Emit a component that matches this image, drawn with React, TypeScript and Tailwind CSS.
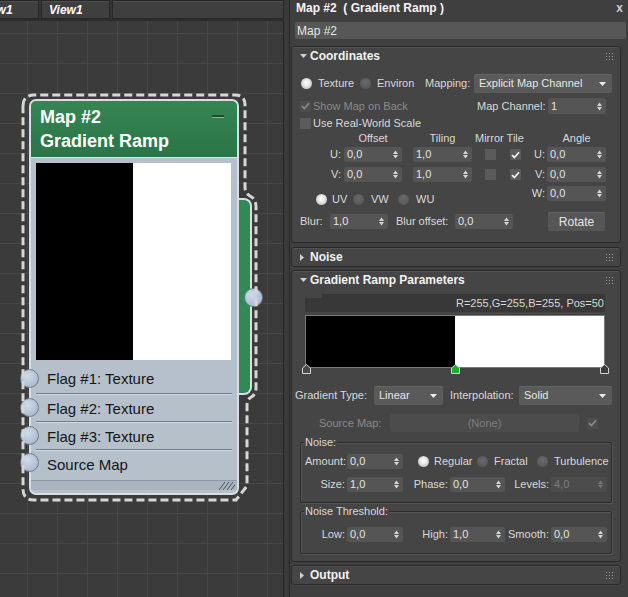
import type { ReactNode } from 'react';

// --- small form atoms (3ds Max dark UI) ---

function T({ children, className = '', dim = false }: { children: ReactNode; className?: string; dim?: boolean }) {
  return (
    <span
      className={`shrink-0 whitespace-nowrap text-[11px] leading-none ${dim ? 'text-[#8a8a8a]' : 'text-[#d9d9d9]'} ${className}`}
    >
      {children}
    </span>
  );
}

function Arrows({ dim = false }: { dim?: boolean }) {
  return (
    <svg width="5" height="9" viewBox="0 0 5 9" className="ml-auto mr-[4px] shrink-0">
      <path d="M0 4 L2.5 0.6 L5 4 Z M0 5 L2.5 8.4 L5 5 Z" fill={dim ? '#777777' : '#d6d6d6'} />
    </svg>
  );
}

function Spinner({ value, className = '', dim = false }: { value: string; className?: string; dim?: boolean }) {
  return (
    <div
      className={`flex shrink-0 items-center rounded-[2px] pl-[3px] text-[11px] leading-none ${
        dim ? 'bg-[#4c4c4c] text-[#7c7c7c]' : 'bg-[#555555] text-[#e4e4e4]'
      } ${className}`}
    >
      <span>{value}</span>
      <Arrows dim={dim} />
    </div>
  );
}

function Dropdown({ value, className = '' }: { value: string; className?: string }) {
  return (
    <div
      className={`flex h-[19px] shrink-0 items-center rounded-[2px] bg-[#5a5a5a] pl-[5px] text-[11px] leading-none text-[#e6e6e6] shadow-[inset_0_1px_0_#656565] ${className}`}
    >
      <span>{value}</span>
      <svg width="7" height="4" viewBox="0 0 7 4" className="ml-auto mr-[6px]">
        <path d="M0 0 H7 L3.5 4 Z" fill="#ececec" />
      </svg>
    </div>
  );
}

function Radio({ on = false, className = '' }: { on?: boolean; className?: string }) {
  return (
    <span
      className={`block h-[11px] w-[11px] shrink-0 rounded-full ${
        on
          ? 'bg-[radial-gradient(circle_at_50%_45%,#ffffff_0%,#ececec_35%,#a9a9a9_100%)]'
          : 'bg-[radial-gradient(circle_at_50%_40%,#6a6a6a_0%,#5b5b5b_60%,#4b4b4b_100%)]'
      } ${className}`}
    />
  );
}

function Check({ on = false, dim = false, className = '' }: { on?: boolean; dim?: boolean; className?: string }) {
  return (
    <span
      className={`flex h-[11px] w-[11px] shrink-0 items-center justify-center rounded-[1px] ${
        dim ? 'bg-[#4d4d4d]' : 'bg-[#5b5b5b]'
      } ${className}`}
    >
      {on && (
        <svg width="9" height="8" viewBox="0 0 9 8">
          <path d="M1 4.2 L3.4 6.6 L8 1.2" fill="none" stroke={dim ? '#8a8a8a' : '#f4f4f4'} strokeWidth="1.7" />
        </svg>
      )}
    </span>
  );
}

function Grip() {
  return (
    <svg width="7" height="7" viewBox="0 0 7 7">
      {[0, 3, 6].flatMap((y) =>
        [0, 3, 6].map((x) => <rect key={`${x}-${y}`} x={x} y={y} width="1" height="1" fill="#9c9c9c" />),
      )}
    </svg>
  );
}

function Head({ title, open = false }: { title: string; open?: boolean }) {
  return (
    <div className="flex h-[18px] items-center pl-[8px] pr-[7px]">
      {open ? (
        <svg width="7" height="4" viewBox="0 0 7 4">
          <path d="M0 0 H7 L3.5 4 Z" fill="#d0d0d0" />
        </svg>
      ) : (
        <svg width="4" height="7" viewBox="0 0 4 7">
          <path d="M0 0 L4 3.5 L0 7 Z" fill="#d0d0d0" />
        </svg>
      )}
      <span className={`${open ? 'ml-[3px]' : 'ml-[6px]'} text-[12px] font-bold leading-none text-[#f2f2f2]`}>
        {title}
      </span>
      <span className="ml-auto flex">
        <Grip />
      </span>
    </div>
  );
}

function Rollout({ children, className = '' }: { children: ReactNode; className?: string }) {
  return (
    <div
      className={`ml-[1px] w-[330px] rounded-[3px] border border-[#2a2a2a] bg-[#454545] shadow-[inset_0_1px_0_#525252] ${className}`}
    >
      {children}
    </div>
  );
}

function Marker({ className, fill }: { className: string; fill: string }) {
  return (
    <svg width="9" height="10" viewBox="0 0 9 10" className={`absolute top-[49px] ${className}`}>
      <path d="M0.5 9.5 V4 L4.5 0.5 L8.5 4 V9.5 Z" fill={fill} stroke="#d4d4d4" strokeWidth="1" />
    </svg>
  );
}

// --- node in the slate editor ---

function Pin({ className }: { className: string }) {
  return (
    <span
      className={`absolute block h-[19px] w-[19px] rounded-full border border-[#6c7c8f] bg-[radial-gradient(circle_at_40%_35%,#d0dbe7_0%,#aebdd0_70%,#97a8bd_100%)] ${className}`}
    />
  );
}

function FlagRow({ label, className }: { label: string; className: string }) {
  return (
    <div className={`flex items-center pl-[16px] text-[15px] leading-none text-[#161616] ${className}`}>{label}</div>
  );
}

function Sep() {
  return <div className="mx-[5px] h-[2px] border-t border-b border-t-[#6e7b8a] border-b-[#d3dbe3]" />;
}

function Node() {
  return (
    <div className="absolute left-[29px] top-[78px] w-[210px]">
      {/* output bar */}
      <div className="absolute left-[208px] top-[99px] h-[197px] w-[15px] rounded-r-[8px] border-y-2 border-r-2 border-[#d6dde4] bg-[#2f8a55]" />

      <div className="relative rounded-[7px] border-2 border-[#d7dee5] bg-[#b5c0cb]">
        <div className="relative flex h-[57px] flex-col rounded-t-[5px] border-b border-[#dfe5ea] bg-gradient-to-b from-[#368654] to-[#2b7447] pl-[9px] pt-[4px] font-bold text-white">
          <span className="text-[18px] leading-[24px]">Map #2</span>
          <span className="text-[18px] leading-[24px]">Gradient Ramp</span>
          <span className="absolute right-[13px] top-[14px] h-[3px] w-[12px] border-b border-[#86b797] bg-[#1c4d2f]" />
        </div>

        <div className="flex flex-col pb-[3px] pt-[5px]">
          <div className="ml-[5px] flex h-[197px] w-[195px]">
            <div className="w-[97px] bg-black" />
            <div className="flex-1 bg-white" />
          </div>
          <FlagRow label="Flag #1: Texture" className="mt-[4px] h-[29px]" />
          <Sep />
          <FlagRow label="Flag #2: Texture" className="h-[26px]" />
          <Sep />
          <FlagRow label="Flag #3: Texture" className="h-[26px]" />
          <Sep />
          <FlagRow label="Source Map" className="h-[26px]" />
          <div className="mt-[3px] flex h-[10px] items-end justify-end border-t border-[#8c98a6] bg-[#a9b4bf] pr-[2px]">
            <svg width="18" height="9" viewBox="0 0 18 9">
              {[0, 4, 8, 12].map((x) => (
                <path key={x} d={`M${x + 2} 9 L${x + 8} 1`} stroke="#4a5562" strokeWidth="1" />
              ))}
            </svg>
          </div>
        </div>
      </div>

      <Pin className="left-[-9px] top-[270px]" />
      <Pin className="left-[-9px] top-[299px]" />
      <Pin className="left-[-9px] top-[327px]" />
      <Pin className="left-[-9px] top-[354px]" />
      <Pin className="left-[215px] top-[189px] h-[18px] w-[18px]" />
    </div>
  );
}

function Tab({ children, className = '' }: { children?: ReactNode; className?: string }) {
  return (
    <div
      className={`flex h-full items-center border border-[#272727] bg-[#3f3f3f] text-[12px] font-bold italic text-white shadow-[inset_0_1px_0_#4f4f4f] ${className}`}
    >
      {children}
    </div>
  );
}

export default function App() {
  return (
    <div className="flex h-[597px] w-[628px] overflow-hidden bg-[#2c2c2c] font-['Liberation_Sans',Arial,sans-serif]">
      {/* ── Slate view ── */}
      <div className="flex w-[284px] shrink-0 flex-col">
        <div className="flex h-[19px] shrink-0 bg-[#353535]">
          <div className="w-[39px] overflow-hidden">
            <Tab className="-ml-[30px] w-[69px] pl-[8px]">View1</Tab>
          </div>
          <Tab className="ml-[2px] w-[69px] pl-[7px]">View1</Tab>
          <Tab className="ml-[2px] flex-1" />
        </div>
        <div className="relative mt-[2px] flex-1 overflow-hidden border-r border-[#232323] bg-[#3b3b3b] bg-[linear-gradient(to_right,#474747_1px,transparent_1px),linear-gradient(to_bottom,#474747_1px,transparent_1px)] bg-[size:30px_30px] bg-[position:27px_12px]">
          <Node />
          <svg className="absolute left-0 top-0" width="284" height="576" viewBox="0 21 284 576">
            <path
              d="M23 106 Q23 95 34 95 L235 95 Q245 95 245 105 L245 187 Q245 193 250 196 Q256 199 256 207 L256 388 Q256 395 250 398 Q247 400 247 406 L247 486 L236 500 L34 500 Q23 500 23 489 Z"
              fill="none"
              stroke="#d6d6d6"
              strokeWidth="3"
              strokeDasharray="8 4"
            />
          </svg>
        </div>
      </div>

      <div className="w-[6px] shrink-0 border-r border-[#262626] bg-[#3a3a3a]" />

      {/* ── Parameter editor ── */}
      <div className="flex w-[338px] flex-col bg-[#3f3f3f]">
        <div className="flex h-[15px] items-center pl-[6px] pr-[5px]">
          <span className="whitespace-pre text-[12px] font-bold leading-none text-[#f4f4f4]">Map #2  ( Gradient Ramp )</span>
          <span className="ml-auto text-[12px] font-bold leading-none text-[#cfcfcf]">x</span>
        </div>
        <div className="ml-[5px] mt-[7px] flex h-[17px] w-[331px] items-center rounded-[2px] bg-[#575757] pl-[2px] text-[12px] leading-none text-[#e6e6e6]">
          Map #2
        </div>

        {/* Coordinates */}
        <Rollout className="mt-[7px] pb-[11px]">
          <Head title="Coordinates" open />
          <div className="mt-[9px] flex h-[19px] items-center">
            <Radio on className="ml-[9px]" />
            <T className="ml-[6px] w-[42px]">Texture</T>
            <Radio />
            <T className="ml-[6px] w-[48px]">Environ</T>
            <T className="w-[49px]">Mapping:</T>
            <Dropdown value="Explicit Map Channel" className="w-[138px]" />
          </div>
          <div className="mt-[5px] flex h-[16px] items-center">
            <Check on dim className="ml-[8px]" />
            <T dim className="ml-[2px] w-[164px]">
              Show Map on Back
            </T>
            <T className="w-[71px]">Map Channel:</T>
            <Spinner value="1" className="h-[16px] w-[58px]" />
          </div>
          <div className="mt-[1px] flex h-[16px] items-center">
            <Check className="ml-[8px]" />
            <T className="ml-[2px]">Use Real-World Scale</T>
          </div>
          <div className="flex h-[15px] items-center">
            <T className="ml-[52px] w-[58px] text-center">Offset</T>
            <T className="ml-[11px] w-[59px] text-center">Tiling</T>
            <T className="ml-[3px] w-[50px]">Mirror Tile</T>
            <T className="ml-[22px] w-[59px] text-center">Angle</T>
          </div>
          {[
            { axis: 'U', cls: 'mt-[1px]' },
            { axis: 'V', cls: 'mt-[5px]' },
          ].map(({ axis, cls }) => (
            <div key={axis} className={`flex h-[15px] items-center ${cls}`}>
              <T className="w-[52px] pr-[3px] text-right">{axis}:</T>
              <Spinner value="0,0" className="h-[15px] w-[58px]" />
              <Spinner value="1,0" className="ml-[11px] h-[15px] w-[59px]" />
              <Check className="ml-[13px]" />
              <Check on className="ml-[14px]" />
              <T className="w-[26px] pr-[2px] text-right">{axis}:</T>
              <Spinner value="0,0" className="h-[15px] w-[59px]" />
            </div>
          ))}
          <div className="mt-[4px] flex h-[20px] items-start">
            <div className="mt-[6px] flex h-[14px] w-[229px] shrink-0 items-center">
              <Radio on className="ml-[24px]" />
              <T className="ml-[5px] w-[21px]">UV</T>
              <Radio />
              <T className="ml-[7px] w-[27px]">VW</T>
              <Radio />
              <T className="ml-[7px]">WU</T>
            </div>
            <T className="flex h-[15px] w-[26px] items-center justify-end pr-[2px]">W:</T>
            <Spinner value="0,0" className="h-[15px] w-[59px]" />
          </div>
          <div className="mt-[6px] flex h-[19px] items-center">
            <T className="ml-[8px] w-[30px]">Blur:</T>
            <Spinner value="1,0" className="h-[15px] w-[58px]" />
            <T className="ml-[8px] w-[59px]">Blur offset:</T>
            <Spinner value="0,0" className="h-[15px] w-[58px]" />
            <div className="ml-[35px] flex h-[19px] w-[57px] items-center justify-center rounded-[2px] bg-[#565656] text-[12px] leading-none text-[#e4e4e4] shadow-[inset_0_1px_0_#626262]">
              Rotate
            </div>
          </div>
        </Rollout>

        {/* Noise */}
        <Rollout className="mt-[4px]">
          <Head title="Noise" />
        </Rollout>

        {/* Gradient Ramp Parameters */}
        <Rollout className="mt-[3px] pb-[7px]">
          <Head title="Gradient Ramp Parameters" open />
          <div className="relative ml-[13px] mt-[5px] flex h-[18px] w-[300px] items-center justify-end bg-[#383838] pr-[1px] text-[11px] leading-none text-[#d6d6d6]">
            <span className="absolute left-0 top-0 h-[4px] w-[17px] bg-[#454545]" />
            R=255,G=255,B=255, Pos=50
          </div>
          <div className="relative ml-[13px] mt-[3px] h-[53px] w-[300px]">
            <div className="flex h-full border border-[#7a7a7a]">
              <div className="w-[149px] bg-black" />
              <div className="flex-1 bg-white" />
            </div>
            <Marker className="left-[-3px]" fill="#4a4a4a" />
            <Marker className="left-[146px]" fill="#1fb02a" />
            <Marker className="left-[295px]" fill="#3c3c3c" />
          </div>

          <div className="mt-[18px] flex h-[19px] items-center">
            <T className="ml-[3px] w-[79px]">Gradient Type:</T>
            <Dropdown value="Linear" className="w-[69px]" />
            <T className="ml-[7px] w-[69px]">Interpolation:</T>
            <Dropdown value="Solid" className="w-[93px]" />
          </div>
          <div className="mt-[9px] flex h-[18px] items-center">
            <T dim className="ml-[27px] w-[71px]">
              Source Map:
            </T>
            <div className="flex h-[18px] w-[189px] items-center justify-center rounded-[2px] bg-[#4c4c4c] text-[11px] leading-none text-[#7e7e7e]">
              (None)
            </div>
            <Check on dim className="ml-[8px]" />
          </div>

          <div className="relative ml-[8px] mt-[10px] h-[61px] w-[312px] rounded-[2px] border border-[#2c2c2c] pt-[11px] shadow-[1px_1px_0_#555555,inset_1px_1px_0_#555555]">
            <T className="absolute left-[3px] top-[-6px] bg-[#454545] px-[1px]">Noise:</T>
            <div className="flex h-[15px] items-center">
              <T className="w-[46px] pr-[1px] text-right">Amount:</T>
              <Spinner value="0,0" className="h-[15px] w-[56px]" />
              <Radio on className="ml-[15px]" />
              <T className="ml-[5px] w-[43px]">Regular</T>
              <Radio />
              <T className="ml-[6px] w-[43px]">Fractal</T>
              <Radio />
              <T className="ml-[6px]">Turbulence</T>
            </div>
            <div className="mt-[8px] flex h-[15px] items-center">
              <T className="w-[46px] pr-[2px] text-right">Size:</T>
              <Spinner value="1,0" className="h-[15px] w-[56px]" />
              <T className="w-[47px] pr-[2px] text-right">Phase:</T>
              <Spinner value="0,0" className="h-[15px] w-[55px]" />
              <T className="w-[46px] pr-[2px] text-right">Levels:</T>
              <Spinner value="4,0" dim className="h-[15px] w-[56px]" />
            </div>
          </div>

          <div className="relative ml-[8px] mt-[8px] h-[43px] w-[312px] rounded-[2px] border border-[#2c2c2c] pt-[15px] shadow-[1px_1px_0_#555555,inset_1px_1px_0_#555555]">
            <T className="absolute left-[3px] top-[-6px] bg-[#454545] px-[1px]">Noise Threshold:</T>
            <div className="flex h-[15px] items-center">
              <T className="w-[46px] pr-[2px] text-right">Low:</T>
              <Spinner value="0,0" className="h-[15px] w-[56px]" />
              <T className="w-[47px] pr-[2px] text-right">High:</T>
              <Spinner value="1,0" className="h-[15px] w-[55px]" />
              <T className="w-[46px] pr-[2px] text-right">Smooth:</T>
              <Spinner value="0,0" className="h-[15px] w-[56px]" />
            </div>
          </div>
        </Rollout>

        {/* Output */}
        <Rollout className="mt-[3px]">
          <Head title="Output" />
        </Rollout>
      </div>
    </div>
  );
}
